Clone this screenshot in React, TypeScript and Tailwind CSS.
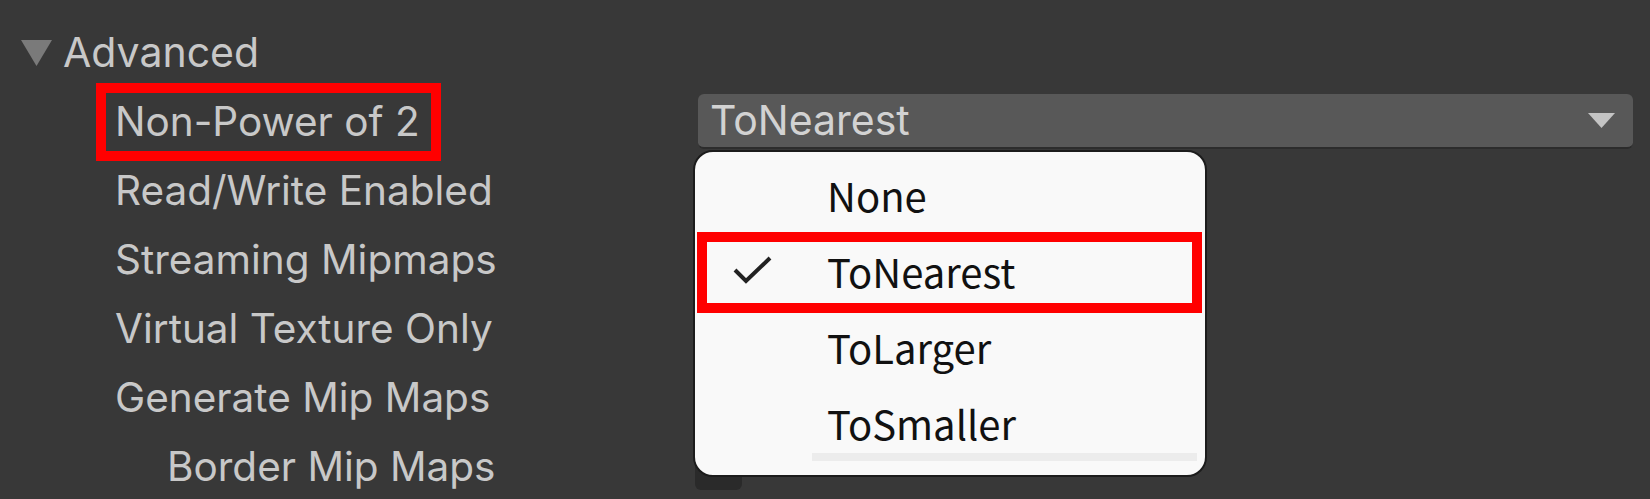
import React from "react";

const labelFont = { fontFamily: "Inter, 'Noto Sans', sans-serif" };
const menuFont = { fontFamily: "'Noto Sans CJK KR', 'Noto Sans', sans-serif" };

const rows = [
  { label: "Non-Power of 2", kind: "dropdown", boxed: true },
  { label: "Read/Write Enabled", kind: "check" },
  { label: "Streaming Mipmaps", kind: "check" },
  { label: "Virtual Texture Only", kind: "check" },
  { label: "Generate Mip Maps", kind: "check" },
  { label: "Border Mip Maps", kind: "check", indent: true },
];

const options = ["None", "ToNearest", "ToLarger", "ToSmaller"];

function Checkbox() {
  return <div className="ml-[-3px] h-[47px] w-[47px] rounded-[6px] bg-[#2a2a2a]" />;
}

function Dropdown() {
  return (
    <div className="flex h-[55px] w-[935px] items-center justify-between rounded-[6px] border-b-2 border-[#2c2c2c] bg-[#585858] pl-[12px] pr-[18px]">
      <span className="text-[41px] leading-none text-[#d2d2d2]" style={labelFont}>
        ToNearest
      </span>
      <svg width="27" height="15" viewBox="0 0 27 15">
        <path d="M0 0 L27 0 L13.5 15 Z" fill="#c4c4c4" />
      </svg>
    </div>
  );
}

function Popup() {
  return (
    <div
      className="absolute left-[693px] top-[150px] h-[327px] w-[514px] rounded-[20px] border-2 border-[#1c1c1c] bg-[#f9f9f9] pt-[5px]"
      style={menuFont}
    >
      {options.map((o) => (
        <div key={o} className="relative flex h-[76px] items-center">
          <div className="w-[132px] pl-[38px]">
            {o === "ToNearest" && (
              <svg width="40" height="28" viewBox="0 0 40 28" className="mt-[-2px]">
                <path d="M2 14 L13 25 L37 2" fill="none" stroke="#222" strokeWidth="4" />
              </svg>
            )}
          </div>
          <span className="text-[40px] leading-[76px] text-[#111]">{o}</span>
          {o === "ToNearest" && (
            <div className="absolute left-[2px] top-[-1px] h-[81px] w-[505px] border-[10px] border-[#ff0000]" />
          )}
        </div>
      ))}
      <div className="ml-[117px] mt-[-8px] h-[8px] w-[385px] bg-[#ececec]" />
    </div>
  );
}

export default function App() {
  return (
    <div className="relative h-[499px] w-[1650px] overflow-hidden bg-[#383838] text-[#c8c8c8]" style={labelFont}>
      <div className="pt-[18px]">
        <div className="flex h-[69px] items-center">
          <svg className="ml-[21px] mr-[11px]" width="31" height="26" viewBox="0 0 31 26">
            <path d="M0 0 L31 0 L15.5 26 Z" fill="#7a7a7a" />
          </svg>
          <span className="text-[41px] leading-[69px]">Advanced</span>
        </div>
        {rows.map((r) => (
          <div key={r.label} className="grid h-[69px] grid-cols-[698px_1fr] items-center">
            <div className={`relative ${r.indent ? "pl-[167px]" : "pl-[115px]"}`}>
              <span className="text-[40.5px] leading-[69px]">{r.label}</span>
              {r.boxed && (
                <div className="absolute left-[96px] top-[-4px] h-[78px] w-[345px] border-[10px] border-[#ff0000]" />
              )}
            </div>
            <div>{r.kind === "dropdown" ? <Dropdown /> : <Checkbox />}</div>
          </div>
        ))}
      </div>
      <Popup />
    </div>
  );
}
